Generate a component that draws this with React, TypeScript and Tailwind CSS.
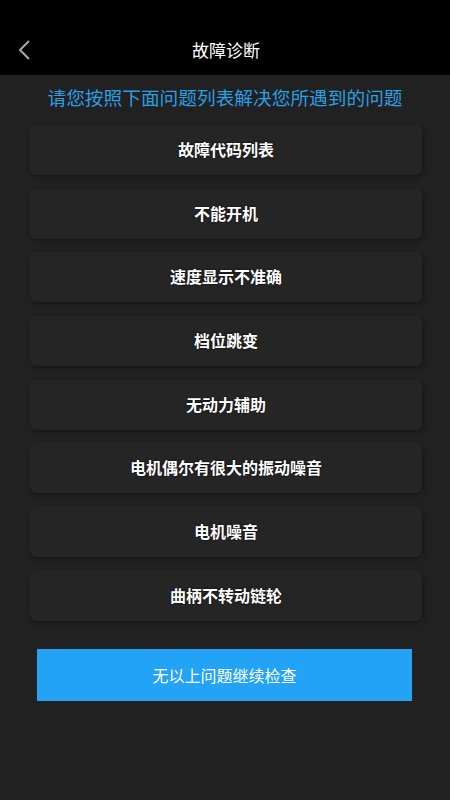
import React from "react";

const items = [
  "故障代码列表",
  "不能开机",
  "速度显示不准确",
  "档位跳变",
  "无动力辅助",
  "电机偶尔有很大的振动噪音",
  "电机噪音",
  "曲柄不转动链轮",
];

export default function App() {
  return (
    <div
      className="w-[450px] h-[800px] bg-[#212121] flex flex-col overflow-hidden"
      style={{ fontFamily: '"Noto Sans CJK SC", "Noto Sans", sans-serif' }}
    >
      <div className="h-[75px] bg-black flex items-end pb-[12px] relative shrink-0">
        <div className="w-full flex justify-center text-[17px] text-white leading-[26px] pl-[2px]">故障诊断</div>
        <svg
          className="absolute left-[16px] top-[39px]"
          width="16"
          height="22"
          viewBox="0 0 16 22"
          fill="none"
        >
          <path d="M13 2 L4 11 L13 20" stroke="#a8a8a8" strokeWidth="2" />
        </svg>
      </div>
      <div className="text-center text-[18.7px] text-[#2a9fe3] leading-[26px] mt-[9px]">
        请您按照下面问题列表解决您所遇到的问题
      </div>
      <div className="flex flex-col gap-[13.7px] mt-[15px] pl-[30px] pr-[28px]">
        {items.map((t) => (
          <div
            key={t}
            className="h-[50px] rounded-[6px] bg-[#252525] shadow-[1px_2px_4px_rgba(0,0,0,0.35)] flex items-center justify-center pb-[2px] text-white text-[16px] font-bold [text-shadow:0_0_2px_#000]"
          >
            {t}
          </div>
        ))}
      </div>
      <div className="mt-[28px] ml-[37px] w-[375px] h-[52px] bg-[#22a3f6] flex items-center justify-center text-white text-[16px]">
        无以上问题继续检查
      </div>
    </div>
  );
}
